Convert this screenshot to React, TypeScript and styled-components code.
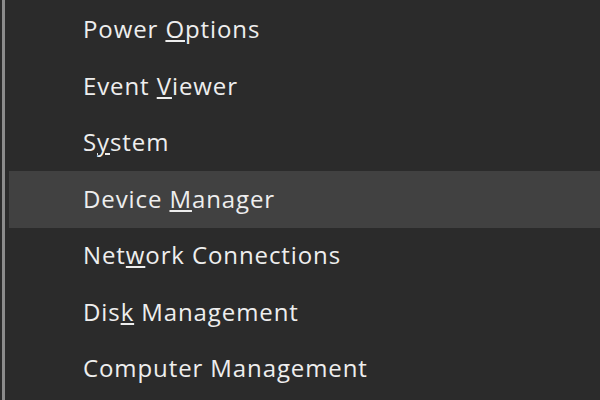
import React from "react";
import styled, { createGlobalStyle } from "styled-components";

const GlobalStyle = createGlobalStyle`
  html, body {
    margin: 0;
    padding: 0;
    background: #2b2b2b;
    overflow: hidden;
  }
`;

const Page = styled.div`
  width: 600px;
  height: 400px;
  padding-left: 2px;
  box-sizing: border-box;
  background: #2b2b2b;
`;

const Menu = styled.div`
  height: 100%;
  border-left: 3px solid #8c8c8c;
  padding: 1.5px 0 0 4px;
  box-sizing: border-box;
  display: flex;
  flex-direction: column;
`;

const Item = styled.div<{ $active?: boolean }>`
  height: 56.5px;
  box-sizing: border-box;
  flex-shrink: 0;
  display: flex;
  align-items: center;
  padding: 0 0 2px 74px;
  background: ${(p) => (p.$active ? "#414141" : "transparent")};
`;

const Label = styled.span`
  color: #eeeeee;
  font-family: "Open Sans", "Noto Sans", sans-serif;
  font-size: 24px;
  font-weight: 500;
  letter-spacing: 0.9px;
  white-space: pre;
`;

const Key = styled.span`
  text-decoration: underline;
  text-underline-offset: 2px;
  text-decoration-thickness: 1.5px;
`;

interface Entry {
  id: number;
  before: string;
  key: string;
  after: string;
  active?: boolean;
}

const entries: Entry[] = [
  { id: 1, before: "Power ", key: "O", after: "ptions" },
  { id: 2, before: "Event ", key: "V", after: "iewer" },
  { id: 3, before: "S", key: "y", after: "stem" },
  { id: 4, before: "Device ", key: "M", after: "anager", active: true },
  { id: 5, before: "Net", key: "w", after: "ork Connections" },
  { id: 6, before: "Dis", key: "k", after: " Management" },
  { id: 7, before: "Computer Management", key: "", after: "" },
];

const App = () => (
  <Page>
    <GlobalStyle />
    <Menu>
      {entries.map((e) => (
        <Item key={e.id} $active={e.active}>
          <Label>
            {e.before}
            {e.key && <Key>{e.key}</Key>}
            {e.after}
          </Label>
        </Item>
      ))}
    </Menu>
  </Page>
);

export default App;
